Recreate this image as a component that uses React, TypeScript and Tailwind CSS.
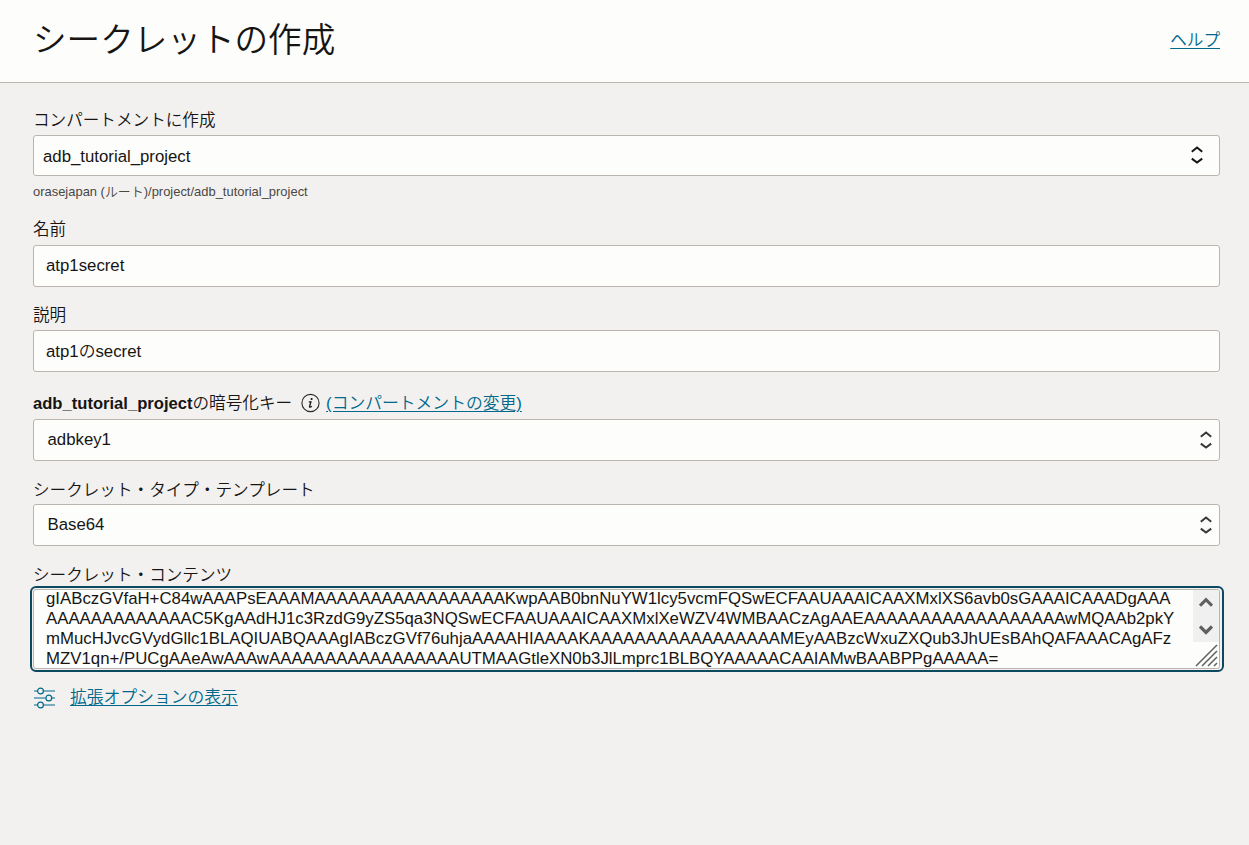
import type { ReactNode } from "react";
import clsx from "clsx";

const CONTENT_LINES = [
  "gIABczGVfaH+C84wAAAPsEAAAMAAAAAAAAAAAAAAAAAKwpAAB0bnNuYW1lcy5vcmFQSwECFAAUAAAICAAXMxlXS6avb0sGAAAICAAADgAAA",
  "AAAAAAAAAAAAAC5KgAAdHJ1c3RzdG9yZS5qa3NQSwECFAAUAAAICAAXMxlXeWZV4WMBAACzAgAAEAAAAAAAAAAAAAAAAAAwMQAAb2pkY",
  "mMucHJvcGVydGllc1BLAQIUABQAAAgIABczGVf76uhjaAAAAHIAAAAKAAAAAAAAAAAAAAAAAMEyAABzcWxuZXQub3JhUEsBAhQAFAAACAgAFz",
  "MZV1qn+/PUCgAAeAwAAAwAAAAAAAAAAAAAAAAAUTMAAGtleXN0b3JlLmprc1BLBQYAAAAACAAIAMwBAABPPgAAAAA=",
];

function UpDownIcon({ className }: { className?: string }) {
  return (
    <svg
      viewBox="0 0 12 20"
      className={clsx("h-5 w-3 shrink-0", className)}
      fill="none"
      stroke="currentColor"
      strokeWidth="2"
    >
      <path d="M.8 6.8 6 2.5l5.2 4.3M.8 13.6 6 17.6l5.2-4" />
    </svg>
  );
}

function InfoIcon() {
  return (
    <svg viewBox="0 0 20 20" className="-mt-0.5 size-5 shrink-0" fill="none">
      <circle cx="10.5" cy="10" r="8.6" stroke="#2b2927" strokeWidth="1.1" />
      <circle cx="11.6" cy="6" r="1.1" fill="#161513" />
      <path
        d="M8.8 8.9h2.1L9.6 13.2q-.3 1.1.5 1 .8-.1 1.7-1.1"
        stroke="#161513"
        strokeWidth="1.3"
      />
    </svg>
  );
}

function SlidersIcon() {
  return (
    <svg
      viewBox="0 0 22 22"
      className="size-[22px] shrink-0"
      fill="none"
      stroke="currentColor"
      strokeWidth="1.2"
    >
      <path d="M0 4h3.5M9.5 4H21M0 11h11.5M18 11h3M0 18h3.5M9.5 18H21" />
      <circle cx="6.5" cy="4" r="2.9" />
      <circle cx="14.8" cy="11" r="2.9" />
      <circle cx="6.5" cy="18" r="2.9" />
    </svg>
  );
}

function Label({ children }: { children: ReactNode }) {
  return (
    <div className="flex h-5 items-center text-[16.6px] leading-5 whitespace-nowrap">
      {children}
    </div>
  );
}

function Box({
  className,
  children,
}: {
  className?: string;
  children: ReactNode;
}) {
  return (
    <div
      className={clsx(
        "flex items-center justify-between rounded-[3px] border border-[#bab5af] bg-[#fdfdfc] text-[16.8px] leading-5",
        className,
      )}
    >
      {children}
    </div>
  );
}

function SecretContent() {
  return (
    <div className="-mr-1 -ml-[3px] rounded-md border-2 border-[#0b4a5e] py-px pr-0.5 pl-px">
      <div className="flex h-20 justify-between overflow-hidden rounded-[3px] border border-[#bab5af] bg-[#fdfdfc]">
        <div className="-mt-px pl-3 text-[16.81px] leading-5 whitespace-nowrap">
          {CONTENT_LINES.map((line) => (
            <div key={line}>{line}</div>
          ))}
        </div>
        <div className="flex w-[26px] shrink-0 flex-col">
          <div className="flex h-[52px] flex-col items-center justify-between bg-[#f0f0f1] py-[7px] text-[#606060]">
            <svg viewBox="0 0 14 10" className="h-2.5 w-3.5" fill="none">
              <path d="M1 8.7 7 2.7l6 6" stroke="currentColor" strokeWidth="3.2" />
            </svg>
            <svg viewBox="0 0 14 10" className="h-2.5 w-3.5" fill="none">
              <path d="M1 1.5l6 6 6-6" stroke="currentColor" strokeWidth="3.2" />
            </svg>
          </div>
          <svg
            viewBox="0 0 26 26"
            className="size-[26px]"
            fill="none"
            stroke="#606060"
            strokeWidth="1.5"
          >
            <path d="M3 24 24 3M9 24 24 9M15 24l9-9M21 24l3-3" />
          </svg>
        </div>
      </div>
    </div>
  );
}

export default function App() {
  return (
    <div className="min-h-screen bg-[#f3f1f0] font-['Liberation_Sans','Noto_Sans_CJK_JP',sans-serif] font-[350] text-[#161513]">
      <header className="flex h-[83px] items-center justify-between border-b border-[#bab5af] bg-[#fdfdfc] pr-[29px] pl-[33px]">
        <h1 className="text-[33.6px] leading-10 font-[350]">
          シークレットの作成
        </h1>
        <a
          href="#"
          className="text-[16.6px] leading-5 text-[#00688c] underline underline-offset-2"
        >
          ヘルプ
        </a>
      </header>

      <main className="flex flex-col pt-7 pr-[29px] pl-[33px]">
        <Label>コンパートメントに作成</Label>
        <Box className="mt-1 h-[41px] pt-0.5 pr-4 pl-[9px]">
          <span>adb_tutorial_project</span>
          <UpDownIcon className="-mt-1" />
        </Box>
        <p className="mt-2 h-4 text-[12.95px] leading-4 text-[#4a4744]">
          orasejapan (ルート)/project/adb_tutorial_project
        </p>

        <div className="mt-5">
          <Label>名前</Label>
          <Box className="mt-[5px] h-[42px] px-3">atp1secret</Box>
        </div>

        <div className="mt-[19px]">
          <Label>説明</Label>
          <Box className="mt-1 h-[42px] px-3 pt-px">atp1のsecret</Box>
        </div>

        <div className="mt-[22px]">
          <Label>
            <b>adb_tutorial_project</b>
            <span className="mr-2">の暗号化キー</span>
            <InfoIcon />
            <a
              href="#"
              className="ml-[6px] text-[16.8px] text-[#00688c] underline underline-offset-2"
            >
              (コンパートメントの変更)
            </a>
          </Label>
          <Box className="mt-[5px] h-[42px] pr-[7px] pl-[13.5px]">
            <span>adbkey1</span>
            <UpDownIcon className="text-[#3a3836]" />
          </Box>
        </div>

        <div className="mt-5">
          <Label>シークレット・タイプ・テンプレート</Label>
          <Box className="mt-[3px] h-[42px] pr-[7px] pl-[13.5px]">
            <span>Base64</span>
            <UpDownIcon className="text-[#3a3836]" />
          </Box>
        </div>

        <div className="mt-5">
          <Label>シークレット・コンテンツ</Label>
          <SecretContent />
        </div>

        <div className="mt-[15px] ml-px flex items-center text-[#00688c]">
          <SlidersIcon />
          <a
            href="#"
            className="ml-3.5 text-[16.8px] leading-5 underline underline-offset-2"
          >
            拡張オプションの表示
          </a>
        </div>
      </main>
    </div>
  );
}
